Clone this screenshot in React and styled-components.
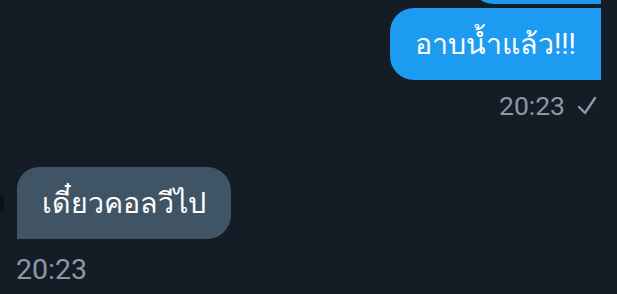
import React from 'react';
import styled, { createGlobalStyle } from 'styled-components';

const GlobalStyle = createGlobalStyle`
  html, body {
    margin: 0;
    padding: 0;
    background: #141d26;
    overflow: hidden;
  }
  body {
    font-family: Roboto, "Noto Sans", "DejaVu Sans", sans-serif;
  }
`;

const Thread = styled.div`
  width: 617px;
  height: 294px;
  background: #141d26;
  display: flex;
  flex-direction: column;
  overflow: hidden;
`;

const Row = styled.div`
  display: flex;
  align-items: center;
  justify-content: ${(p) => (p.$mine ? 'flex-end' : 'flex-start')};
  padding: ${(p) => (p.$mine ? '0 16px 0 0' : '0')};
  margin-top: ${(p) => p.$top || 0}px;
`;

const Bubble = styled.div`
  box-sizing: border-box;
  height: ${(p) => p.$h || 72}px;
  padding: 0 25px;
  display: flex;
  align-items: center;
  color: #ffffff;
  font-size: 28.6px;
  white-space: nowrap;
  background: ${(p) => (p.$mine ? '#1d9bf0' : '#3f5566')};
  border-radius: ${(p) => (p.$mine ? '24px 0 0 24px' : '22px 24px 24px 0')};
  margin-left: ${(p) => p.$left || 0}px;
`;

const Stub = styled(Bubble)`
  width: 131px;
`;

const Avatar = styled.div`
  width: 4px;
  height: 18px;
  border-radius: 0 9px 9px 0;
  background: #0c1218;
`;

const Meta = styled.div`
  display: flex;
  align-items: center;
  justify-content: ${(p) => (p.$mine ? 'flex-end' : 'flex-start')};
  gap: 12px;
  padding: ${(p) => (p.$mine ? '0 20px 0 0' : '0 0 0 16px')};
  margin-top: ${(p) => p.$top || 0}px;
  color: #8b98a5;
  font-size: ${(p) => p.$size || 24}px;
  line-height: 1;
`;

const Check = () => (
  <svg width="20" height="20" viewBox="0 0 20 20" fill="none">
    <path d="M2 11 L8 17 L18 2" stroke="#8b98a5" strokeWidth="2.4" strokeLinecap="round" strokeLinejoin="round" />
  </svg>
);

export default function App() {
  return (
    <Thread>
      <GlobalStyle />
      <Row $mine $top={-56}>
        <Stub $mine $h={60} />
      </Row>
      <Row $mine $top={4}>
        <Bubble $mine>อาบน้ำแล้ว!!!</Bubble>
      </Row>
      <Meta $mine $top={13} $size={26.5}>
        <span>20:23</span>
        <Check />
      </Meta>
      <Row $top={47}>
        <Avatar />
        <Bubble $left={13}>เดี๋ยวคอลวีไป</Bubble>
      </Row>
      <Meta $top={17} $size={28.5}>
        <span>20:23</span>
      </Meta>
    </Thread>
  );
}
